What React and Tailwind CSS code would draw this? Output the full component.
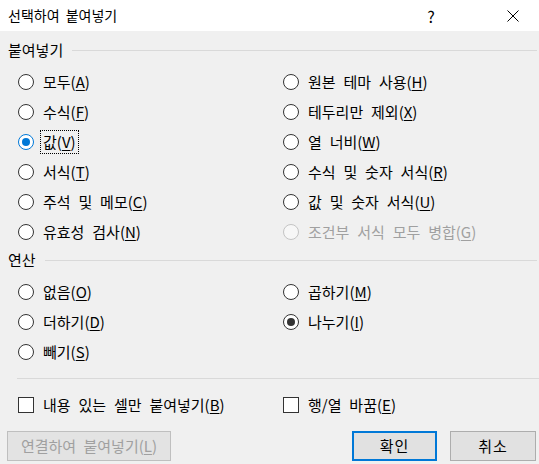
import React from "react";

const FONT = { fontFamily: '"Noto Sans CJK KR", "Noto Sans", sans-serif' };

function Label({ text, k, disabled, focus }) {
  return (
    <span
      className={`ml-[6px] px-[2px] leading-[22px] border [word-spacing:4.5px] ${focus ? "border-dotted border-black" : "border-transparent"} ${disabled ? "text-[#a0a0a0]" : "text-black"}`}
    >
      {text}(<span className="underline underline-offset-[2px]">{k}</span>)
    </span>
  );
}

function Radio({ text, k, state = "off", focus }) {
  let circle = "border-[#333333] bg-white";
  let dot = null;
  if (state === "blue") {
    circle = "border-[#0078d7] bg-white";
    dot = <span className="w-[8px] h-[8px] rounded-full bg-[#0078d7]" />;
  } else if (state === "dark") {
    dot = <span className="w-[8px] h-[8px] rounded-full bg-[#333333]" />;
  } else if (state === "disabled") {
    circle = "border-[#c4c4c4] bg-[#f7f7f7]";
  }
  return (
    <div className="h-[30px] flex items-center">
      <span className={`w-[16px] h-[16px] rounded-full border flex items-center justify-center shrink-0 ${circle}`}>
        {dot}
      </span>
      <Label text={text} k={k} disabled={state === "disabled"} focus={focus} />
    </div>
  );
}

function Check({ text, k }) {
  return (
    <div className="h-[30px] flex items-center">
      <span className="w-[16px] h-[16px] border border-[#333333] bg-white shrink-0" />
      <Label text={text} k={k} />
    </div>
  );
}

function Header({ text }) {
  return (
    <div className="h-[20px] flex items-center pl-[8px] pr-[2px]">
      <span className="text-black leading-[20px]">{text}</span>
      <span className="flex-1 h-px bg-[#d9d9d9] ml-[9px]" />
    </div>
  );
}

export default function App() {
  return (
    <div className="w-[539px] h-[464px] bg-[#f0f0f0] text-[15px] flex flex-col overflow-hidden" style={FONT}>
      <div className="h-[31px] bg-white flex items-center pl-[8px] shrink-0">
        <span className="text-black text-[14px] [word-spacing:3px]">선택하여 붙여넣기</span>
        <span className="ml-auto w-[30px] text-center text-[16px] text-black mr-[52px]">?</span>
        <span className="w-[30px] flex justify-center mr-[11px]">
          <svg width="12" height="12" viewBox="0 0 12 12">
            <path d="M0.5 0.5 L11.5 11.5 M11.5 0.5 L0.5 11.5" stroke="#000" strokeWidth="1" />
          </svg>
        </span>
      </div>

      <div className="mt-[9px]">
        <Header text="붙여넣기" />
      </div>

      <div className="mt-[7px] grid grid-cols-[265px_1fr] pl-[18px]">
        <div className="flex flex-col">
          <Radio text="모두" k="A" />
          <Radio text="수식" k="F" />
          <Radio text="값" k="V" state="blue" focus />
          <Radio text="서식" k="T" />
          <Radio text="주석 및 메모" k="C" />
          <Radio text="유효성 검사" k="N" />
        </div>
        <div className="flex flex-col">
          <Radio text="원본 테마 사용" k="H" />
          <Radio text="테두리만 제외" k="X" />
          <Radio text="열 너비" k="W" />
          <Radio text="수식 및 숫자 서식" k="R" />
          <Radio text="값 및 숫자 서식" k="U" />
          <Radio text="조건부 서식 모두 병합" k="G" state="disabled" />
        </div>
      </div>

      <div className="mt-[3px]">
        <Header text="연산" />
      </div>

      <div className="mt-[7px] grid grid-cols-[265px_1fr] pl-[18px]">
        <div className="flex flex-col">
          <Radio text="없음" k="O" />
          <Radio text="더하기" k="D" />
          <Radio text="빼기" k="S" />
        </div>
        <div className="flex flex-col">
          <Radio text="곱하기" k="M" />
          <Radio text="나누기" k="I" state="dark" />
        </div>
      </div>

      <div className="mt-[11px] ml-[17px] h-px bg-[#d9d9d9]" />

      <div className="mt-[11px] grid grid-cols-[265px_1fr] pl-[18px]">
        <Check text="내용 있는 셀만 붙여넣기" k="B" />
        <Check text="행/열 바꿈" k="E" />
      </div>

      <div className="mt-[11px] flex items-center h-[30px]">
        <div className="ml-[7px] w-[164px] h-[30px] border border-[#bfbfbf] bg-[#e3e3e3] flex items-center justify-center text-[#a0a0a0] [word-spacing:4px]">
          연결하여 붙여넣기(<span className="underline underline-offset-[2px]">L</span>)
        </div>
        <div className="ml-auto w-[85px] h-[30px] border-2 border-[#0078d7] bg-[#e1e1e1] flex items-center justify-center text-black tracking-[1px]">
          확인
        </div>
        <div className="ml-[13px] mr-[3px] w-[86px] h-[30px] border border-[#adadad] bg-[#e1e1e1] flex items-center justify-center text-black tracking-[1px]">
          취소
        </div>
      </div>
    </div>
  );
}
